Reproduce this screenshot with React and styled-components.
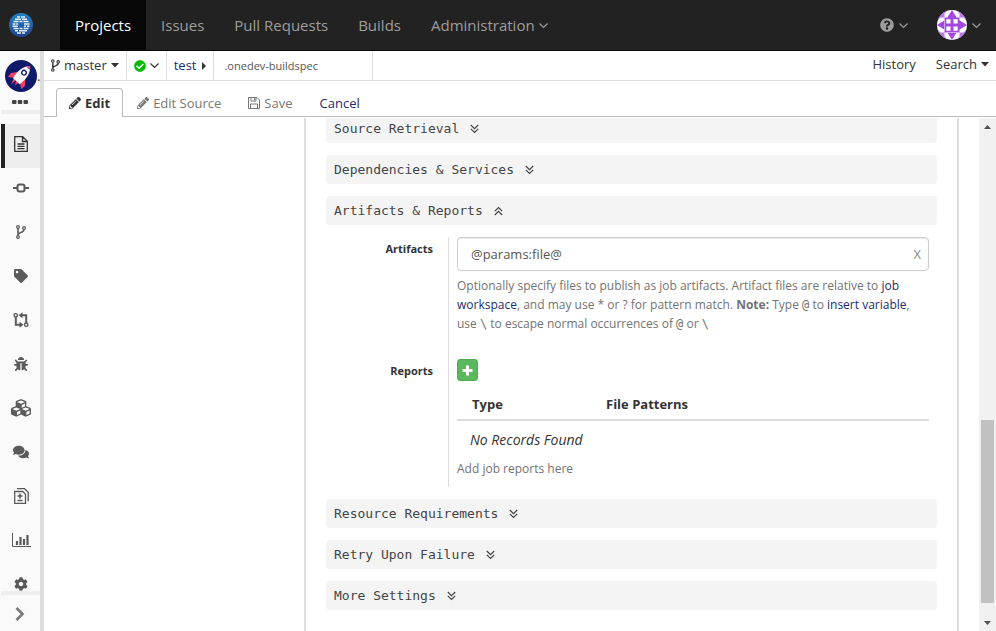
import React from "react";
import styled, { createGlobalStyle, css } from "styled-components";
import {
  FaBug,
  FaCheckCircle,
  FaCog,
  FaComments,
  FaCubes,
  FaPencilAlt,
  FaQuestionCircle,
  FaTag,
} from "react-icons/fa";

const GlobalStyle = createGlobalStyle`
  *, *::before, *::after { box-sizing: border-box; }
  body {
    margin: 0;
    background: #fff;
    color: #333;
    font-family: "Open Sans", "Noto Sans", sans-serif;
    font-size: 13px;
    line-height: 19px;
  }
  a { color: #1c2d6e; text-decoration: none; }
  button, input { font: inherit; color: inherit; }
  svg { display: block; flex: none; }
`;

const mono = css`
  font-family: "DejaVu Sans Mono", "Liberation Mono", monospace;
`;

const Page = styled.div`
  display: flex;
  flex-direction: column;
  height: 100vh;
`;

/* ---------- top bar ---------- */

const TopBar = styled.header`
  display: flex;
  align-items: stretch;
  flex: none;
  height: 51px;
  background: #222;
  border-bottom: 1px solid #080808;
`;

const Brand = styled.a`
  display: flex;
  align-items: center;
  width: 60px;
  padding-left: 9px;
`;

const NavLink = styled.a`
  display: flex;
  align-items: center;
  gap: 4px;
  padding: 0 15px;
  font-size: 15px;
  color: ${(p) => (p.$active ? "#fff" : "#9d9d9d")};
  background: ${(p) => (p.$active ? "#080808" : "transparent")};
`;

const NavEnd = styled.div`
  display: flex;
  align-items: center;
  gap: 29px;
  margin-left: auto;
  padding-right: 15px;
`;

const NavMenu = styled.button`
  display: flex;
  align-items: center;
  gap: 5px;
  padding: 0;
  border: 0;
  background: none;
  color: #9d9d9d;
`;

/* ---------- side bar ---------- */

const Body = styled.div`
  display: flex;
  flex: 1;
  min-height: 0;
`;

const SideBar = styled.nav`
  display: flex;
  flex-direction: column;
  flex: none;
  width: 44px;
  background: #fafafa;
  border-right: 4px solid #ddd;
`;

const ProjectLink = styled.a`
  display: flex;
  align-items: center;
  height: 43px;
  padding: 7px 0 0 5px;
  overflow: hidden;
  color: #333;
`;

const MoreButton = styled.button`
  display: flex;
  justify-content: center;
  align-items: center;
  height: 16px;
  padding: 0;
  border: 0;
  background: none;
  color: #444;
`;

const Divider = styled.div`
  flex: none;
  height: 4px;
  margin-left: 1px;
  background: #eee;
`;

const SideItems = styled.div`
  flex: 1;
  min-height: 0;
  padding-top: 10px;
  overflow: hidden;
`;

const SideItem = styled.a`
  display: flex;
  align-items: center;
  justify-content: center;
  height: 44px;
  margin-left: 1px;
  padding: 0 3px 4px 0;
  color: ${(p) => (p.$active ? "#333" : "#5a5a5a")};
  background: ${(p) => (p.$active ? "#eee" : "transparent")};
  border-left: 4px solid ${(p) => (p.$active ? "#222" : "transparent")};
`;

const ExpandButton = styled.button`
  display: flex;
  align-items: center;
  justify-content: center;
  height: 36px;
  padding: 2px 0 0;
  border: 0;
  background: none;
  color: #777;
`;

/* ---------- file path bar ---------- */

const Main = styled.main`
  display: flex;
  flex-direction: column;
  flex: 1;
  min-width: 0;
`;

const PathBar = styled.div`
  display: flex;
  flex: none;
  height: 30px;
  border-bottom: 1px solid #ddd;
`;

const PathCell = styled.div`
  display: flex;
  align-items: center;
  gap: 6px;
  padding: 0 7px;
  border-right: 1px solid #ddd;
`;

const PathButton = styled.button`
  display: flex;
  align-items: center;
  gap: 4px;
  padding: 0;
  border: 0;
  background: none;
  color: #333;
`;

const FileName = styled.input`
  width: 159px;
  padding: 0 10px;
  border: 0;
  border-right: 1px solid #ddd;
  outline: 0;
  background: #fff;
  color: #555;
  font-size: 11px;
`;

const PathActions = styled.div`
  display: flex;
  align-items: center;
  gap: 20px;
  margin-left: auto;
  padding: 0 7px 3px 0;
`;

/* ---------- tabs ---------- */

const TabBar = styled.div`
  display: flex;
  align-items: flex-end;
  flex: none;
  gap: 1px;
  height: 36px;
  padding-left: 12px;
  border-bottom: 1px solid #bbb;
`;

const Tab = styled.button`
  display: flex;
  align-items: center;
  gap: 4px;
  height: 29px;
  margin-bottom: -1px;
  padding: 0 12px;
  border: 1px solid ${(p) => (p.$active ? "#bbb" : "transparent")};
  border-bottom: 0;
  border-radius: 4px 4px 0 0;
  background: ${(p) => (p.$active ? "#fff" : "transparent")};
  color: ${(p) => (p.$active ? "#333" : p.$link ? "#1c2d6e" : "#777")};
  font-weight: ${(p) => (p.$active ? 700 : 400)};
`;

/* ---------- editor area ---------- */

const Viewport = styled.div`
  display: flex;
  flex: 1;
  min-height: 0;
  margin-top: 1px;
`;

const Canvas = styled.div`
  flex: 1;
  min-width: 0;
  padding: 0 20px 0 260px;
  overflow: hidden;
`;

const Panel = styled.div`
  height: 100%;
  padding: 0 20px;
  border: solid #ddd;
  border-width: 0 2px;
  overflow: hidden;
`;

const Sections = styled.div`
  display: flex;
  flex-direction: column;
  gap: 12px;
  margin-top: -4px;
`;

const SectionButton = styled.button`
  ${mono}
  display: flex;
  align-items: center;
  gap: 11px;
  width: 100%;
  height: 29px;
  padding: 0 8px;
  border: 0;
  border-radius: 4px;
  background: #f4f4f4;
  color: #444;
`;

const Form = styled.div`
  display: grid;
  grid-template-columns: 123px 1fr;
  padding-right: 8px;
`;

const FieldName = styled.label`
  padding: 2px 15px 0 0;
  border-right: 1px solid #ddd;
  text-align: right;
  font-size: 11px;
  font-weight: 700;
`;

const Field = styled.div`
  min-width: 0;
  padding: 0 0 ${(p) => p.$bottom}px 8px;
`;

const InputBox = styled.div`
  display: flex;
  align-items: center;
  height: 34px;
  padding: 0 7px 0 13px;
  border: 1px solid #ccc;
  border-radius: 4px;
  box-shadow: inset 0 1px 1px rgba(0, 0, 0, 0.075);
`;

const TextInput = styled.input`
  flex: 1;
  min-width: 0;
  padding: 0;
  border: 0;
  outline: 0;
  background: none;
  color: #555;
`;

const ClearButton = styled.button`
  padding: 0;
  border: 0;
  background: none;
  color: #888;
`;

const Help = styled.p`
  margin: ${(p) => p.$top}px 0 0;
  color: #737373;
  font-size: 12px;
`;

const Code = styled.code`
  ${mono}
  font-size: 12px;
  line-height: 1;
`;

const AddButton = styled.button`
  display: flex;
  align-items: center;
  justify-content: center;
  width: 21px;
  height: 22px;
  padding: 0;
  border: 1px solid #4cae4c;
  border-radius: 3px;
  background: #5cb85c;
  color: #fff;
`;

const Table = styled.table`
  width: 100%;
  margin-top: 8px;
  border-collapse: collapse;
`;

const Th = styled.th`
  width: ${(p) => p.$width || "auto"};
  height: 31px;
  padding: 0 15px;
  border-bottom: 2px solid #ddd;
  text-align: left;
`;

const EmptyCell = styled.td`
  height: 37px;
  padding: 0 13px;
  font-size: 14px;
  font-style: italic;
`;

/* ---------- scroll bar ---------- */

const ScrollTrack = styled.div`
  display: flex;
  flex-direction: column;
  align-items: center;
  flex: none;
  width: 17px;
  background: #f1f1f1;
`;

const ScrollArrow = styled.div`
  display: flex;
  align-items: center;
  justify-content: center;
  height: 17px;
  color: #505050;
`;

const ScrollSpace = styled.div`
  flex: ${(p) => p.$grow} 0 0;
`;

const ScrollThumb = styled.div`
  flex: 183 0 0;
  width: 13px;
  background: #c1c1c1;
`;

/* ---------- drawings ---------- */

const Chevron = () => (
  <svg width="9" height="9" viewBox="0 0 9 9" fill="none" stroke="currentColor" strokeWidth="1.2">
    <path d="M.5 2.500l4 4 4-4" />
  </svg>
);

const DoubleChevron = ({ up }) => (
  <svg width="9" height="10" viewBox="0 0 9 10" fill="none" stroke="currentColor" strokeWidth="1.2">
    <path d={up ? "M.8 5.200l3.700-3.700 3.700 3.700M.8 9l3.700-3.700L8.200 9" : "M.8 1l3.700 3.700L8.200 1M.8 4.800l3.700 3.700 3.700-3.700"} />
  </svg>
);

const CaretDown = () => (
  <svg width="8" height="5" viewBox="0 0 8 5" fill="currentColor">
    <path d="M0 0h8L4 4.600z" />
  </svg>
);

const CaretRight = () => (
  <svg width="4" height="8" viewBox="0 0 4 8" fill="currentColor">
    <path d="M0 0v8l4-4z" />
  </svg>
);

const PlusIcon = () => (
  <svg width="11" height="11" viewBox="0 0 11 11" stroke="currentColor" strokeWidth="3">
    <path d="M5.500.5v10M.5 5.500h10" />
  </svg>
);

const BranchIcon = ({ height = 14 }) => (
  <svg width={height - 4} height={height} viewBox="0 0 10 14" fill="none" stroke="currentColor" strokeWidth="1.2">
    <circle cx="2" cy="2" r="1.4" />
    <circle cx="2" cy="12" r="1.4" />
    <circle cx="8" cy="3" r="1.4" />
    <path d="M2 3.600v6.800M8 4.600c0 3.600-6 2-6 5.400" strokeWidth="1.6" />
  </svg>
);

const OneDevLogo = () => (
  <svg width="24" height="24" viewBox="0 0 24 24">
    <defs>
      <linearGradient id="brandFill" x1="0" y1="0" x2="0" y2="1">
        <stop offset="0" stopColor="#2385c6" />
        <stop offset="1" stopColor="#23408e" />
      </linearGradient>
    </defs>
    <circle cx="12" cy="12" r="12" fill="url(#brandFill)" />
    <path
      d="M8 4h3M12 4h4M6 6.300h6M13 6.300h5M4.500 8.600h5M10.500 8.600h3M14.500 8.600h5M3.500 10.900h3M7.200 10.900h2M15 10.900h5.500M3.500 13.200h5.500M15 13.200h2M18 13.200h2.500M4.500 15.500h5M10.500 15.500h3M14.500 15.500h5M6 17.800h3M10 17.800h8M8 20.100h4M13 20.100h3"
      stroke="#e8f2fb"
      strokeWidth="1.5"
    />
  </svg>
);

const RocketLogo = () => (
  <svg width="32" height="32" viewBox="0 0 32 32">
    <circle cx="16" cy="16" r="16" fill="#0f1a6b" />
    <g transform="rotate(42 16 16)">
      <path d="M11.500 14.500L6.500 20.500l.5 5 5-3.500zM20.500 14.500l5 6-.5 5-5-3.500z" fill="#ef4068" />
      <path d="M12.500 23h2.600l-1 6zM15.800 23h2.800l-.8 4.500z" fill="#ef4068" />
      <path d="M16 2.500c-4.500 4-6.500 11-4.500 20.500h9c2-9.500 0-16.500-4.500-20.500z" fill="#f6f5f8" />
      <path d="M16 2.500c-1 .9-1.900 2-2.600 3.200h5.200c-.7-1.200-1.600-2.300-2.600-3.200z" fill="#ef4068" />
      <circle cx="16" cy="11.500" r="2.300" fill="#fff" stroke="#0f1a6b" strokeWidth="1.300" />
    </g>
  </svg>
);

const Avatar = () => (
  <svg width="30" height="30" viewBox="0 0 30 30">
    <defs>
      <clipPath id="avatarClip">
        <circle cx="15" cy="15" r="15" />
      </clipPath>
    </defs>
    <g clipPath="url(#avatarClip)">
      <rect width="30" height="30" fill="#fff" />
      <g fill="#a349dd">
        <path d="M7.500 7.500h15v15h-15zM10 8l5-8 5 8zM10 22l5 8 5-8zM8 10l-8 5 8 5zM22 10l8 5-8 5z" />
        <path d="M0 6l6-6h5L7.500 3.500v4h-4L0 11zM30 6l-6-6h-5l3.500 3.500v4h4L30 11zM0 24l6 6h5l-3.500-3.500v-4h-4L0 19zM30 24l-6 6h-5l3.500-3.500v-4h4L30 19z" opacity=".75" />
      </g>
      <path
        d="M9.300 9.300h4.200v4.200H9.300zM16.500 9.300h4.200v4.200h-4.200zM9.300 16.500h4.200v4.200H9.300zM16.500 16.500h4.200v4.200h-4.200z"
        fill="#fff"
      />
    </g>
  </svg>
);

const SaveIcon = () => (
  <svg width="12" height="12" viewBox="0 0 12 12" fill="none" stroke="currentColor">
    <path d="M.5.5h8.500l2.500 2.500v8.500H.5zM3 .5v3.500h5V.5M2.500 11.500V7h7v4.500M6.500 1v2.500" />
  </svg>
);

const FileIcon = () => (
  <svg width="14" height="16" viewBox="0 0 14 16" fill="none" stroke="currentColor" strokeWidth="1.3">
    <path d="M.7.700h8L13.300 5.300v10H.7zM8.500.7v4.800h4.800M3.500 8h7M3.500 10.300h7M3.500 12.600h7" />
  </svg>
);

const CommitIcon = () => (
  <svg width="16" height="10" viewBox="0 0 16 10" fill="none" stroke="currentColor" strokeWidth="2">
    <rect x="4.500" y="1.500" width="7" height="7" rx="2" />
    <path d="M0 5h4M12 5h4" />
  </svg>
);

const PullRequestIcon = () => (
  <svg width="16" height="16" viewBox="0 0 16 16" fill="none" stroke="currentColor">
    <circle cx="2.800" cy="3.300" r="1.700" strokeWidth="1.400" />
    <circle cx="13.200" cy="12.700" r="1.700" strokeWidth="1.400" />
    <path d="M2.800 5v7.700H8M13.200 11V3.300H8" strokeWidth="2" />
    <path d="M9.500.3v6L5.500 3.300zM6.500 9.700v6l4-3z" fill="currentColor" stroke="none" />
  </svg>
);

const DiffIcon = () => (
  <svg width="15" height="16" viewBox="0 0 15 16" fill="none" stroke="currentColor" strokeWidth="1.300">
    <path d="M.7 3.500h8l2.800 2.800v9H.7zM3 .7h7.500l3.700 3.600v9" />
    <path d="M6 5.500v5M3.500 8h5M3.500 12.500h5" strokeWidth="1.600" />
  </svg>
);

const ChartIcon = () => (
  <svg width="19" height="14" viewBox="0 0 19 14" fill="none" stroke="currentColor">
    <path d="M.5 0v13.500H19" />
    <path d="M5 12V8M8.500 12V4M12 12V6M15.500 12V2" strokeWidth="2.200" />
  </svg>
);

const ExpandIcon = () => (
  <svg width="10" height="14" viewBox="0 0 10 14" fill="none" stroke="currentColor" strokeWidth="2.600">
    <path d="M1.500 1l6 6-6 6" />
  </svg>
);

const DotsIcon = () => (
  <svg width="16" height="4" viewBox="0 0 16 4" fill="currentColor">
    <rect width="4.500" height="4" rx="1" />
    <rect x="5.750" width="4.500" height="4" rx="1" />
    <rect x="11.500" width="4.500" height="4" rx="1" />
  </svg>
);

const ArrowIcon = ({ up }) => (
  <svg width="7" height="4" viewBox="0 0 7 4" fill="currentColor">
    <path d={up ? "M0 4l3.500-4L7 4z" : "M0 0l3.500 4L7 0z"} />
  </svg>
);

/* ---------- page ---------- */

const sideItems = [
  { label: "Files", icon: <FileIcon />, active: true },
  { label: "Commits", icon: <CommitIcon /> },
  { label: "Branches", icon: <BranchIcon height={14} /> },
  { label: "Tags", icon: <FaTag size={14} /> },
  { label: "Pull requests", icon: <PullRequestIcon /> },
  { label: "Issues", icon: <FaBug size={14} /> },
  { label: "Builds", icon: <FaCubes size={20} /> },
  { label: "Comments", icon: <FaComments size={16} /> },
  { label: "Compare", icon: <DiffIcon /> },
  { label: "Statistics", icon: <ChartIcon /> },
  { label: "Settings", icon: <FaCog size={14} /> },
];

const Section = ({ title, open }) => (
  <SectionButton type="button" aria-expanded={!!open}>
    {title}
    <DoubleChevron up={open} />
  </SectionButton>
);

export default function App() {
  return (
    <Page>
      <GlobalStyle />
      <TopBar>
        <Brand href="#" aria-label="Home">
          <OneDevLogo />
        </Brand>
        <NavLink href="#" $active>Projects</NavLink>
        <NavLink href="#">Issues</NavLink>
        <NavLink href="#">Pull Requests</NavLink>
        <NavLink href="#">Builds</NavLink>
        <NavLink href="#">
          Administration <Chevron />
        </NavLink>
        <NavEnd>
          <NavMenu type="button" aria-label="Help">
            <FaQuestionCircle size={14} />
            <Chevron />
          </NavMenu>
          <NavMenu type="button" aria-label="Account">
            <Avatar />
            <Chevron />
          </NavMenu>
        </NavEnd>
      </TopBar>
      <Body>
        <SideBar>
          <ProjectLink href="#" aria-label="Project">
            <RocketLogo />.
          </ProjectLink>
          <MoreButton type="button" aria-label="More">
            <DotsIcon />
          </MoreButton>
          <Divider />
          <SideItems>
            {sideItems.map((item) => (
              <SideItem key={item.label} href="#" aria-label={item.label} $active={item.active}>
                {item.icon}
              </SideItem>
            ))}
          </SideItems>
          <Divider />
          <ExpandButton type="button" aria-label="Expand">
            <ExpandIcon />
          </ExpandButton>
        </SideBar>
        <Main>
          <PathBar>
            <PathCell>
              <PathButton type="button">
                <BranchIcon height={13} />
                master
                <CaretDown />
              </PathButton>
            </PathCell>
            <PathCell>
              <PathButton type="button" aria-label="Build status">
                <FaCheckCircle size={12} color="#0b0" />
                <Chevron />
              </PathButton>
            </PathCell>
            <PathCell>
              <a href="#">test</a>
              <CaretRight />
            </PathCell>
            <FileName aria-label="File name" defaultValue=".onedev-buildspec" />
            <PathActions>
              <PathButton type="button">History</PathButton>
              <PathButton type="button">
                Search <CaretDown />
              </PathButton>
            </PathActions>
          </PathBar>
          <TabBar>
            <Tab type="button" $active>
              <FaPencilAlt size={12} /> Edit
            </Tab>
            <Tab type="button">
              <FaPencilAlt size={12} /> Edit Source
            </Tab>
            <Tab type="button">
              <SaveIcon /> Save
            </Tab>
            <Tab type="button" $link>Cancel</Tab>
          </TabBar>
          <Viewport>
            <Canvas>
              <Panel>
                <Sections>
                  <Section title="Source Retrieval" />
                  <Section title="Dependencies & Services" />
                  <Section title="Artifacts & Reports" open />
                  <Form>
                    <FieldName htmlFor="artifacts">Artifacts</FieldName>
                    <Field $bottom={26}>
                      <InputBox>
                        <TextInput id="artifacts" defaultValue="@params:file@" />
                        <ClearButton type="button">X</ClearButton>
                      </InputBox>
                      <Help $top={5}>
                        Optionally specify files to publish as job artifacts. Artifact files are relative to{" "}
                        <a href="#">job workspace</a>, and may use * or ? for pattern match. <b>Note:</b> Type{" "}
                        <Code>@</Code> to <a href="#">insert variable</a>, use <Code>\</Code> to escape normal
                        occurrences of <Code>@</Code> or <Code>\</Code>
                      </Help>
                    </Field>
                    <FieldName htmlFor="add-report">Reports</FieldName>
                    <Field $bottom={9}>
                      <AddButton id="add-report" type="button" aria-label="Add report">
                        <PlusIcon />
                      </AddButton>
                      <Table>
                        <thead>
                          <tr>
                            <Th $width="134px">Type</Th>
                            <Th>File Patterns</Th>
                          </tr>
                        </thead>
                        <tbody>
                          <tr>
                            <EmptyCell colSpan={2}>No Records Found</EmptyCell>
                          </tr>
                        </tbody>
                      </Table>
                      <Help $top={2}>Add job reports here</Help>
                    </Field>
                  </Form>
                  <Section title="Resource Requirements" />
                  <Section title="Retry Upon Failure" />
                  <Section title="More Settings" />
                </Sections>
              </Panel>
            </Canvas>
            <ScrollTrack aria-hidden="true">
              <ScrollArrow>
                <ArrowIcon up />
              </ScrollArrow>
              <ScrollSpace $grow={285} />
              <ScrollThumb />
              <ScrollSpace $grow={11} />
              <ScrollArrow>
                <ArrowIcon />
              </ScrollArrow>
            </ScrollTrack>
          </Viewport>
        </Main>
      </Body>
    </Page>
  );
}
